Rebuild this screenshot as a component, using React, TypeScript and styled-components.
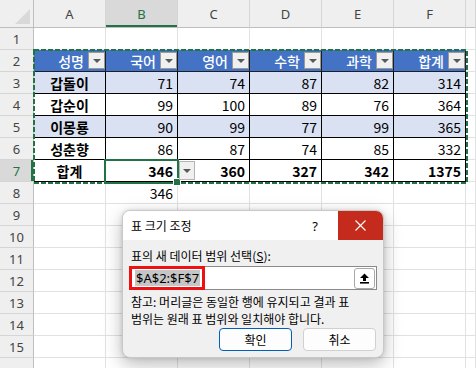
import React from 'react';
import styled, { createGlobalStyle } from 'styled-components';

const GlobalStyle = createGlobalStyle`
  html, body {
    margin: 0;
    padding: 0;
    background: #fff;
  }
  body {
    font-family: "Noto Sans CJK KR", "Noto Sans", sans-serif;
  }
  * {
    box-sizing: border-box;
  }
`;

const green = '#217346';

const Sheet = styled.div`
  position: relative;
  width: 476px;
  height: 368px;
  overflow: hidden;
  display: grid;
  grid-template-columns: 34px repeat(6, 72px) 1fr;
  grid-template-rows: 28px;
  grid-auto-rows: 22px;
  background: #fff;
`;

const Corner = styled.div`
  background: #efefef;
  border-right: 1px solid #bebebe;
  border-bottom: 1px solid #bebebe;
  display: flex;
  align-items: flex-end;
  justify-content: flex-end;
  padding: 0 3px 3px 0;
`;

const ColHead = styled.div<{ $active?: boolean }>`
  background: ${(p) => (p.$active ? '#d9d9d9' : '#efefef')};
  color: ${(p) => (p.$active ? green : '#444')};
  border-right: 1px solid #d5d5d5;
  border-bottom: 1px solid #bebebe;
  box-shadow: ${(p) => (p.$active ? `inset 0 -2px 0 ${green}` : 'none')};
  font-family: "Noto Sans", sans-serif;
  font-size: 13px;
  display: flex;
  align-items: center;
  justify-content: center;
  padding-top: 1px;
`;

const RowHead = styled.div<{ $active?: boolean }>`
  background: ${(p) => (p.$active ? '#d9d9d9' : '#efefef')};
  color: ${(p) => (p.$active ? green : '#444')};
  border-right: 1px solid #bebebe;
  border-bottom: 1px solid #d5d5d5;
  box-shadow: ${(p) => (p.$active ? `inset -2px 0 0 ${green}` : 'none')};
  font-family: "Noto Sans", sans-serif;
  font-size: 13px;
  display: flex;
  align-items: center;
  justify-content: center;
`;

const GridCell = styled.div`
  border-right: 1px solid #e1e1e1;
  border-bottom: 1px solid #e1e1e1;
  display: flex;
  align-items: center;
  justify-content: flex-end;
  padding-right: 4px;
  font-size: 14px;
  color: #000;
`;

const HeadCell = styled.div`
  background: #4472c4;
  color: #fff;
  border-right: 1px solid #1f1f1f;
  border-bottom: 1px solid #1f1f1f;
  display: flex;
  align-items: center;
  justify-content: flex-end;
  gap: 4px;
  padding-right: 0;
  font-size: 14px;
  font-weight: 500;
`;

const BodyCell = styled.div<{ $band?: boolean; $bold?: boolean; $center?: boolean }>`
  background: ${(p) => (p.$band ? '#d9e1f2' : '#fff')};
  color: #000;
  border-right: 1px solid #000;
  border-bottom: 1px solid #000;
  display: flex;
  align-items: center;
  justify-content: ${(p) => (p.$center ? 'center' : 'flex-end')};
  padding-right: ${(p) => (p.$center ? '0' : '4px')};
  font-size: 14px;
  font-weight: ${(p) => (p.$bold ? 700 : 400)};
`;

const FilterBtn = styled.span`
  width: 17px;
  height: 17px;
  background: #f0f0f0;
  border: 1px solid #9a9a9a;
  display: flex;
  align-items: center;
  justify-content: center;
  &::after {
    content: '';
    border-left: 4px solid transparent;
    border-right: 4px solid transparent;
    border-top: 4px solid #595959;
    margin-top: 1px;
  }
`;

const TotalDrop = styled(FilterBtn)`
  position: absolute;
  left: 179px;
  top: 161px;
  width: 16px;
  height: 19px;
  border-color: #b4b4b4;
`;

const Marquee = styled.svg`
  position: absolute;
  left: 33px;
  top: 49px;
  pointer-events: none;
`;

const Selected = styled.div`
  position: absolute;
  left: 104px;
  top: 159px;
  width: 75px;
  height: 25px;
  border: 2px solid ${green};
  &::after {
    content: '';
    position: absolute;
    right: -4px;
    bottom: -4px;
    width: 6px;
    height: 6px;
    background: ${green};
    border: 1px solid #fff;
  }
`;

/* dialog */

const Dialog = styled.div`
  position: absolute;
  left: 122px;
  top: 210px;
  width: 262px;
  height: 148px;
  background: #f0f0f0;
  border: 1px solid #c8c8c8;
  border-radius: 8px;
  overflow: hidden;
  box-shadow: 0 6px 18px rgba(0, 0, 0, 0.28), 0 0 4px rgba(0, 0, 0, 0.12);
  display: flex;
  flex-direction: column;
  font-size: 12px;
  color: #000;
`;

const TitleBar = styled.div`
  height: 29px;
  background: #fff;
  display: flex;
  align-items: center;
  padding-left: 8px;
  flex-shrink: 0;
  span {
    flex: 1;
  }
`;

const HelpBtn = styled.div`
  width: 30px;
  text-align: center;
  font-family: "Noto Sans", sans-serif;
  font-size: 13px;
  margin-right: 8px;
`;

const CloseBtn = styled.div`
  width: 45px;
  height: 29px;
  background: #c42b1c;
  display: flex;
  align-items: center;
  justify-content: center;
`;

const Body = styled.div`
  flex: 1;
  display: flex;
  flex-direction: column;
  padding: 7px 6px 6px 6px;
`;

const Label = styled.div`
  padding-left: 2px;
  line-height: 17px;
  u {
    text-decoration: underline;
  }
`;

const RangeInput = styled.div`
  margin-top: 2px;
  height: 24px;
  background: #fff;
  border: 1px solid #8a8a8a;
  display: flex;
  align-items: center;
  padding-right: 1px;
`;

const Highlight = styled.div`
  height: 24px;
  margin: -1px 0 0 -1px;
  border: 3px solid #ee1111;
  display: flex;
  align-items: center;
  padding: 0 2px 0 3px;
  span {
    background: #c6c6c6;
    font-family: "Noto Sans", sans-serif;
    font-size: 13px;
    line-height: 16px;
    padding: 0 1px;
  }
`;

const UploadBtn = styled.div`
  margin-left: auto;
  width: 21px;
  height: 21px;
  background: #fff;
  border: 1px solid #a8a8a8;
  border-radius: 3px;
  display: flex;
  align-items: center;
  justify-content: center;
`;

const Note = styled.div`
  margin-top: 3px;
  padding-left: 2px;
  line-height: 17px;
  white-space: nowrap;
`;

const Buttons = styled.div`
  margin-top: auto;
  display: flex;
  justify-content: flex-end;
  gap: 11px;
  padding-right: 1px;
`;

const Button = styled.div<{ $primary?: boolean }>`
  width: 73px;
  height: 23px;
  background: #fdfdfd;
  border: 1px solid ${(p) => (p.$primary ? '#005fb8' : '#d0d0d0')};
  border-radius: 4px;
  display: flex;
  align-items: center;
  justify-content: center;
`;

const header = ['성명', '국어', '영어', '수학', '과학', '합계'];
const body: (string | number)[][] = [
  ['갑돌이', 71, 74, 87, 82, 314],
  ['갑순이', 99, 100, 89, 76, 364],
  ['이몽룡', 90, 99, 77, 99, 365],
  ['성춘향', 86, 87, 74, 85, 332],
  ['합계', 346, 360, 327, 342, 1375],
];
const letters = ['A', 'B', 'C', 'D', 'E', 'F', ''];

const renderCell = (r: number, c: number) => {
  const key = `${r}-${c}`;
  if (r === 2 && c < 6) {
    return (
      <HeadCell key={key}>
        {header[c]}
        <FilterBtn />
      </HeadCell>
    );
  }
  if (r >= 3 && r <= 7 && c < 6) {
    const val = body[r - 3][c];
    return (
      <BodyCell key={key} $band={r === 3 || r === 5} $bold={c === 0 || r === 7} $center={c === 0}>
        {val}
      </BodyCell>
    );
  }
  if (r === 8 && c === 1) return <GridCell key={key}>346</GridCell>;
  return <GridCell key={key} />;
};

const App = () => {
  // row 16 only peeks in at the bottom edge, so its number stays hidden
  const rows = Array.from({ length: 16 }, (_, i) => i + 1);
  return (
    <>
      <GlobalStyle />
      <Sheet>
        <Corner>
          <svg width="15" height="15" viewBox="0 0 15 15">
            <polygon points="15,0 15,15 0,15" fill="#d9d9d9" />
          </svg>
        </Corner>
        {letters.map((l, i) => (
          <ColHead key={'h' + i} $active={l === 'B'}>
            {l}
          </ColHead>
        ))}
        {rows.map((r) => (
          <React.Fragment key={r}>
            <RowHead $active={r === 7}>{r < 16 ? r : ''}</RowHead>
            {letters.map((_, c) => renderCell(r, c))}
          </React.Fragment>
        ))}

        <Marquee width="435" height="135">
          <rect x="1" y="1" width="433" height="133" fill="none" stroke={green} strokeWidth="2" strokeDasharray="5 2" />
        </Marquee>
        <Selected />
        <TotalDrop />

        <Dialog>
          <TitleBar>
            <span>표 크기 조정</span>
            <HelpBtn>?</HelpBtn>
            <CloseBtn>
              <svg width="11" height="11" viewBox="0 0 11 11">
                <path d="M0.5 0.5 L10.5 10.5 M10.5 0.5 L0.5 10.5" stroke="#fff" strokeWidth="1.1" />
              </svg>
            </CloseBtn>
          </TitleBar>
          <Body>
            <Label>
              표의 새 데이터 범위 선택(<u>S</u>):
            </Label>
            <RangeInput>
              <Highlight>
                <span>$A$2:$F$7</span>
              </Highlight>
              <UploadBtn>
                <svg width="11" height="11" viewBox="0 0 11 11">
                  <path d="M5.5 0.5 L1 5 H4 V8 H7 V5 H10 Z" fill="#000" />
                  <rect x="1" y="9" width="9" height="1.6" fill="#000" />
                </svg>
              </UploadBtn>
            </RangeInput>
            <Note>
              참고: 머리글은 동일한 행에 유지되고 결과 표
              <br />
              범위는 원래 표 범위와 일치해야 합니다.
            </Note>
            <Buttons>
              <Button $primary>확인</Button>
              <Button>취소</Button>
            </Buttons>
          </Body>
        </Dialog>
      </Sheet>
    </>
  );
};

export default App;
